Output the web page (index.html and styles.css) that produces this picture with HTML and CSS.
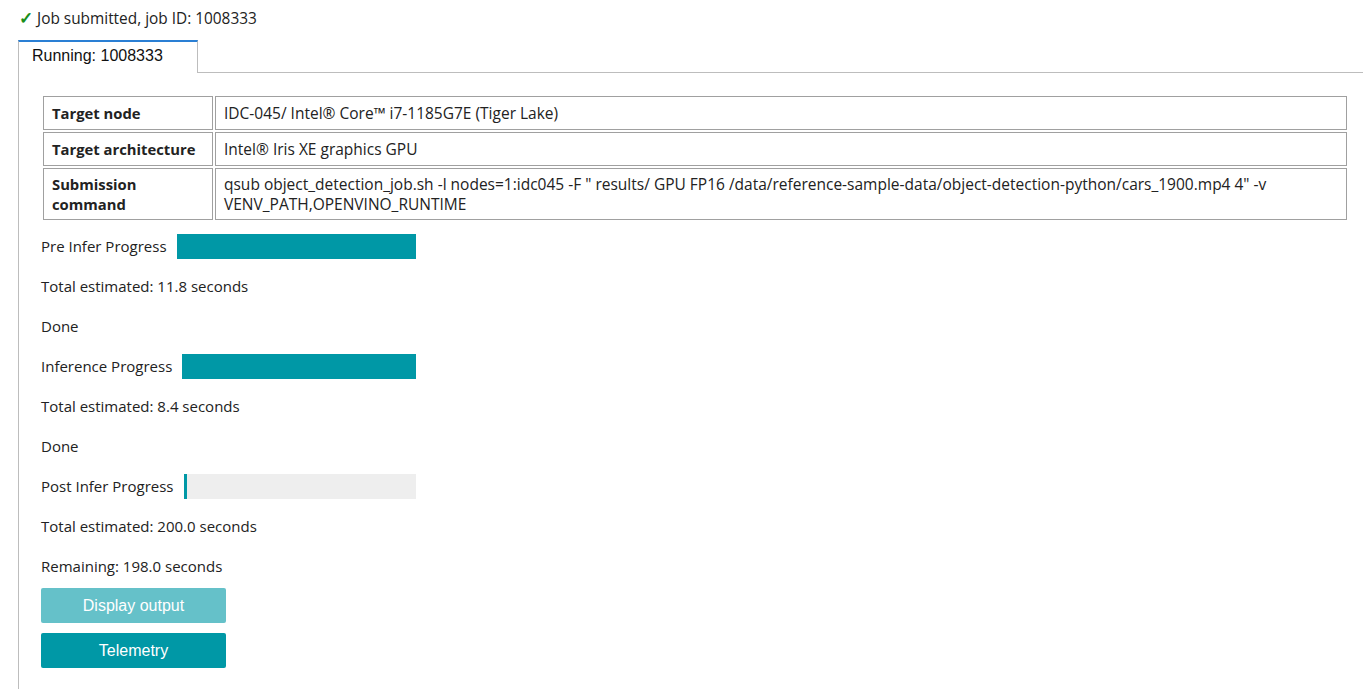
FILE: index.html
```html
<!DOCTYPE html>
<html lang="en">
<head>
    <meta charset="UTF-8">
    <meta name="viewport" content="width=device-width, initial-scale=1.0">
    <title>Job 1008333</title>
    <link rel="stylesheet" href="styles.css">
</head>
<body>

<div class="status"><span class="check">&#10003;</span> Job submitted, job ID: 1008333</div>

<div class="tabbar">
    <div class="tab">Running: 1008333</div>
    <div class="tab-filler"></div>
</div>

<div class="panel">
    <table class="info">
        <tr class="single">
            <td class="key">Target node</td>
            <td>IDC-045/ Intel&reg; Core&trade; i7-1185G7E (Tiger Lake)</td>
        </tr>
        <tr class="single">
            <td class="key">Target architecture</td>
            <td>Intel&reg; Iris XE graphics GPU</td>
        </tr>
        <tr>
            <td class="key">Submission command</td>
            <td>qsub object_detection_job.sh -l nodes=1:idc045 -F " results/ GPU FP16 /data/reference-sample-data/object-detection-python/cars_1900.mp4 4" -v VENV_PATH,OPENVINO_RUNTIME</td>
        </tr>
    </table>

    <div class="progress-list">
        <div class="line progress">
            <span class="label">Pre Infer Progress</span>
            <div class="bar"><div class="fill" style="width: 100%"></div></div>
        </div>
        <div class="line">Total estimated: 11.8 seconds</div>
        <div class="line">Done</div>

        <div class="line progress">
            <span class="label">Inference Progress</span>
            <div class="bar"><div class="fill" style="width: 100%"></div></div>
        </div>
        <div class="line">Total estimated: 8.4 seconds</div>
        <div class="line">Done</div>

        <div class="line progress">
            <span class="label">Post Infer Progress</span>
            <div class="bar"><div class="fill" style="width: 1.3%"></div></div>
        </div>
        <div class="line">Total estimated: 200.0 seconds</div>
        <div class="line">Remaining: 198.0 seconds</div>
    </div>

    <div class="buttons">
        <button type="button" class="btn" disabled>Display output</button>
        <button type="button" class="btn">Telemetry</button>
    </div>
</div>

</body>
</html>
```

FILE: styles.css
```css
body {
    font-family: "Open Sans", "Noto Sans", sans-serif;
    font-size: 15px;
    line-height: 20px;
    color: #222;
    background-color: #fff;
    margin: 0;
    padding: 8px 0 0 18px;
}

.status {
    padding-left: 1px;
    height: 20px;
    font-size: 15.4px;
}

.check {
    color: #1a8f1a;
    font-size: 17px;
    font-weight: bold;
}

.tabbar {
    display: flex;
    align-items: flex-end;
    margin-top: 12px;
}

.tab {
    width: 180px;
    height: 33px;
    box-sizing: border-box;
    padding: 4px 0 0 13px;
    border-top: 2px solid #2a7fd4;
    border-left: 1px solid #bdbdbd;
    border-right: 1px solid #bdbdbd;
    font-family: "Liberation Sans", Arial, sans-serif;
    font-size: 16px;
    line-height: 20px;
    color: #111;
    background-color: #fff;
}

.tab-filler {
    flex: 1;
    border-bottom: 1px solid #bdbdbd;
}

.panel {
    border-left: 1px solid #bdbdbd;
    padding: 21px 14px 40px 22px;
}

.info {
    width: 100%;
    border-spacing: 2px;
    margin: 0;
    font-size: 15.5px;
}

.info tr.single {
    height: 34px;
}

.info td {
    border: 1px solid #a0a0a0;
    padding: 5px 8px;
    vertical-align: middle;
}

.info td.key {
    width: 152px;
    font-weight: bold;
    font-size: 14.8px;
}

.progress-list {
    margin-top: 4px;
    width: 375px;
}

.line {
    height: 40px;
    display: flex;
    align-items: center;
}

.label {
    margin-right: 10px;
    white-space: nowrap;
}

.bar {
    flex: 1;
    height: 25px;
    background-color: #eeeeee;
}

.fill {
    height: 100%;
    background-color: #0098a6;
}

.buttons {
    display: flex;
    flex-direction: column;
    gap: 10px;
    margin-top: 2px;
}

.btn {
    width: 185px;
    height: 35px;
    background-color: #0098a6;
    color: #fff;
    border: none;
    border-radius: 2px;
    font-family: "Liberation Sans", Arial, sans-serif;
    font-size: 16px;
    cursor: pointer;
}

.btn:disabled {
    opacity: 0.6;
    cursor: default;
}
```
